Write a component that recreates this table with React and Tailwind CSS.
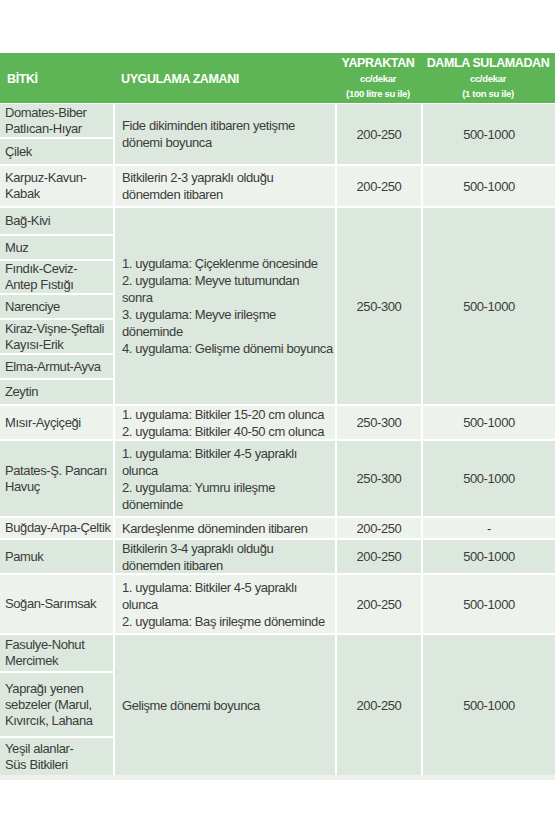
const DARK = "bg-[#dce8dd]";
const LIGHT = "bg-[#edf3ec]";

const groups = [
  {
    plants: ["Domates-Biber\nPatlıcan-Hıyar", "Çilek"],
    span: "row-span-2",
    text: "Fide dikiminden itibaren yetişme\ndönemi boyunca",
    y: "200-250",
    d: "500-1000",
    shade: DARK,
  },
  {
    plants: ["Karpuz-Kavun-\nKabak"],
    span: "row-span-1",
    text: "Bitkilerin 2-3 yapraklı olduğu\ndönemden itibaren",
    y: "200-250",
    d: "500-1000",
    shade: LIGHT,
  },
  {
    plants: [
      "Bağ-Kivi",
      "Muz",
      "Fındık-Ceviz-\nAntep Fıstığı",
      "Narenciye",
      "Kiraz-Vişne-Şeftali\nKayısı-Erik",
      "Elma-Armut-Ayva",
      "Zeytin",
    ],
    span: "row-span-7",
    text:
      "1. uygulama: Çiçeklenme öncesinde\n2. uygulama: Meyve tutumundan\nsonra\n3. uygulama: Meyve irileşme\ndöneminde\n4. uygulama: Gelişme dönemi boyunca",
    y: "250-300",
    d: "500-1000",
    shade: DARK,
  },
  {
    plants: ["Mısır-Ayçiçeği"],
    span: "row-span-1",
    text: "1. uygulama: Bitkiler 15-20 cm olunca\n2. uygulama: Bitkiler 40-50 cm olunca",
    y: "250-300",
    d: "500-1000",
    shade: LIGHT,
  },
  {
    plants: ["Patates-Ş. Pancarı\nHavuç"],
    span: "row-span-1",
    text: "1. uygulama: Bitkiler 4-5 yapraklı\nolunca\n2. uygulama: Yumru irileşme\ndöneminde",
    y: "250-300",
    d: "500-1000",
    shade: DARK,
  },
  {
    plants: ["Buğday-Arpa-Çeltik"],
    span: "row-span-1",
    text: "Kardeşlenme döneminden itibaren",
    y: "200-250",
    d: "-",
    shade: LIGHT,
  },
  {
    plants: ["Pamuk"],
    span: "row-span-1",
    text: "Bitkilerin 3-4 yapraklı olduğu\ndönemden itibaren",
    y: "200-250",
    d: "500-1000",
    shade: DARK,
  },
  {
    plants: ["Soğan-Sarımsak"],
    span: "row-span-1",
    text: "1. uygulama: Bitkiler 4-5 yapraklı\nolunca\n2. uygulama: Baş irileşme döneminde",
    y: "200-250",
    d: "500-1000",
    shade: LIGHT,
  },
  {
    plants: [
      "Fasulye-Nohut\nMercimek",
      "Yaprağı yenen\nsebzeler (Marul,\nKıvırcık, Lahana",
      "Yeşil alanlar-\nSüs Bitkileri",
    ],
    span: "row-span-3",
    text: "Gelişme dönemi boyunca",
    y: "200-250",
    d: "500-1000",
    shade: DARK,
  },
];

function Lines({ text }) {
  return text.split("\n").map((l, i) => <div key={i}>{l}</div>);
}

export default function App() {
  return (
    <div
      className="w-[555px] h-[832px] bg-white text-[#3b3b3b] text-[13px] leading-[17px] tracking-[-0.4px]"
      style={{ fontFamily: '"Liberation Sans", Arial, sans-serif' }}
    >
      <div className="h-[53px]" />
      <div className="grid grid-cols-[113px_222px_86px_134px] h-[50px] bg-[#5db556] text-white font-bold text-[12.5px]">
        <div className="flex items-center pl-[7px] pt-[2px]">BİTKİ</div>
        <div className="flex items-center pl-[8px] pt-[2px]">UYGULAMA ZAMANI</div>
        <div className="flex flex-col items-center pt-[3px] leading-[15px]">
          <div>YAPRAKTAN</div>
          <div className="text-[9.5px] leading-[16px] tracking-[-0.3px]">cc/dekar</div>
          <div className="text-[9.5px] leading-[14px] tracking-[-0.3px]">(100 litre su ile)</div>
        </div>
        <div className="flex flex-col items-center pt-[3px] leading-[15px]">
          <div>DAMLA SULAMADAN</div>
          <div className="text-[9.5px] leading-[16px] tracking-[-0.3px]">cc/dekar</div>
          <div className="text-[9.5px] leading-[14px] tracking-[-0.3px]">(1 ton su ile)</div>
        </div>
      </div>
      <div className="grid grid-cols-[113px_220px_84px_132px] grid-rows-[33px_25px_40px_26px_23px_32px_23px_33px_23px_24px_33px_75px_20px_33px_58px_36px_63px_37px] gap-[2px] bg-white pt-[1px]">
        {groups.map((g, gi) =>
          g.plants.map((p, pi) => {
            const cells = [
              <div
                key={`p${gi}-${pi}`}
                className={`col-start-1 ${g.shade} flex flex-col justify-center pl-[5px] leading-[16px] whitespace-nowrap`}
              >
                <Lines text={p} />
              </div>,
            ];
            if (pi === 0) {
              cells.push(
                <div
                  key={`t${gi}`}
                  className={`${g.span} ${g.shade} flex flex-col justify-center pl-[7px] whitespace-nowrap`}
                >
                  <Lines text={g.text} />
                </div>,
                <div
                  key={`y${gi}`}
                  className={`${g.span} ${g.shade} flex items-center justify-center`}
                >
                  {g.y}
                </div>,
                <div
                  key={`d${gi}`}
                  className={`${g.span} ${g.shade} flex items-center justify-center`}
                >
                  {g.d}
                </div>
              );
            }
            return cells;
          })
        )}
      </div>
      <div className="h-[5px] bg-[#edf3ec]" />
    </div>
  );
}
